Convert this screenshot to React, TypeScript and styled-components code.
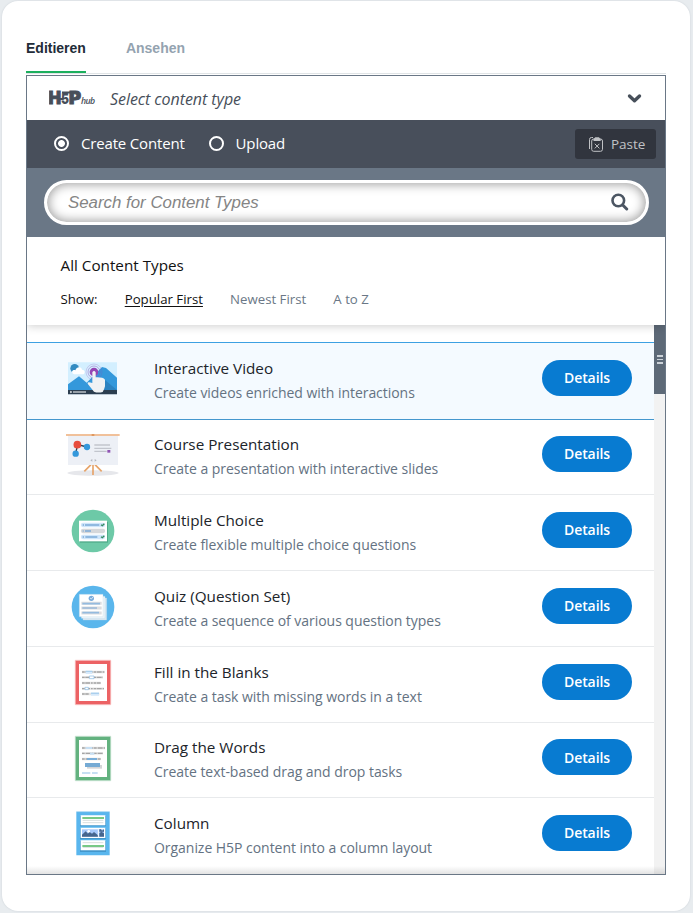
import React from "react";
import styled, { createGlobalStyle } from "styled-components";

const GlobalStyle = createGlobalStyle`
  * { box-sizing: border-box; }
  body { margin: 0; background: #e8ecef; font-family: "Open Sans", "Noto Sans", sans-serif; }
  button { font: inherit; border: 0; padding: 0; background: none; cursor: pointer; }
`;

const Page = styled.div`
  height: 913px;
  padding: 1px 3px 2px 2px;
`;

const Card = styled.main`
  height: 910px;
  padding: 0 24px;
  background: #fff;
  border-radius: 16px;
  box-shadow: 0 0 2px rgba(70, 90, 110, 0.18);
`;

const Tabs = styled.nav`
  display: flex;
  gap: 40px;
  width: 640px;
  height: 73px;
  padding-top: 32px;
  border-bottom: 1px solid #e0e4e6;
`;

const Tab = styled.button<{ $active?: boolean }>`
  height: 40px;
  padding-bottom: 9px;
  font: bold 14px "Liberation Sans", Arial, sans-serif;
  letter-spacing: 0;
  color: ${(p) => (p.$active ? "#222c38" : "#94a3b0")};
  border-bottom: 2px solid ${(p) => (p.$active ? "#1caf5d" : "transparent")};
`;

const Hub = styled.section`
  width: 640px;
  height: 800px;
  margin-top: 1px;
  border: 1px solid #6a7786;
  overflow: hidden;
`;

const HubHeader = styled.header`
  display: flex;
  align-items: center;
  height: 44px;
  padding: 0 23px 0 22px;
  color: #474f5a;
`;

const HubTitle = styled.span`
  flex: 1;
  margin-left: 13px;
  padding-top: 1px;
  font-size: 16px;
  font-style: italic;
  letter-spacing: -0.05px;
`;

const ModeBar = styled.div`
  display: flex;
  align-items: center;
  height: 48px;
  padding: 0 9px 0 27px;
  background: #484f5b;
  color: #fff;
`;

const Mode = styled.label`
  display: flex;
  align-items: center;
  gap: 12px;
  margin-right: 24px;
  padding-bottom: 2px;
  font-size: 15px;
  letter-spacing: -0.17px;
`;

const Radio = styled.span<{ $on?: boolean }>`
  width: 15px;
  height: 15px;
  border: 2px solid #fff;
  border-radius: 50%;
  background: ${(p) => (p.$on ? "radial-gradient(circle, #fff 0 3px, transparent 3.8px)" : "none")};
`;

const Paste = styled.button`
  display: flex;
  align-items: center;
  gap: 7px;
  width: 81px;
  height: 30px;
  margin-left: auto;
  padding-left: 13px;
  border-radius: 3px;
  background: #31353e;
  color: #c0c2c5;
  font-size: 13.5px;
`;

const SearchBar = styled.div`
  height: 69px;
  padding: 12px 16px 12px 17px;
  background: #6a7786;
`;

const SearchField = styled.div`
  display: flex;
  align-items: center;
  justify-content: space-between;
  height: 45px;
  padding: 0 17px 1px 21px;
  border: 3px solid #fff;
  border-radius: 23px;
  background: #fff;
  box-shadow: inset 0 0 11px 1px rgba(0, 0, 0, 0.4);
`;

const Placeholder = styled.span`
  padding-top: 2px;
  font: italic 16.85px "Liberation Sans", Arial, sans-serif;
  color: #858585;
`;

const Filters = styled.div`
  position: relative;
  z-index: 1;
  height: 88px;
  padding: 17px 33.5px 0;
  box-shadow: 0 1px 9px rgba(0, 0, 0, 0.2);
  clip-path: inset(0 0 -14px 0);
  background: #fff;
`;

const FilterTitle = styled.h2`
  margin: 0;
  font-size: 15.25px;
  line-height: 22px;
  font-weight: 400;
  color: #111;
`;

const SortRow = styled.div`
  display: flex;
  gap: 27.2px;
  margin-top: 13px;
  font-size: 13.23px;
  line-height: 20px;
`;

const SortItem = styled.span<{ $kind?: "label" | "active" }>`
  color: ${(p) => (p.$kind ? "#111" : "#6a7786")};
  text-decoration: ${(p) => (p.$kind === "active" ? "underline" : "none")};
  text-underline-offset: 2px;
`;

const ListArea = styled.div`
  position: relative;
  display: flex;
  height: 549px;
  &::after {
    content: "";
    position: absolute;
    inset: auto 0 0;
    height: 8px;
    background: linear-gradient(rgba(0, 0, 0, 0), rgba(0, 0, 0, 0.11));
  }
`;

const List = styled.ul`
  flex: 1;
  margin: 0;
  padding: 17px 0 0;
  list-style: none;
`;

const Row = styled.li<{ $active?: boolean }>`
  display: flex;
  align-items: center;
  height: ${(p) => (p.$active ? "78px" : "75.88px")};
  margin-bottom: ${(p) => (p.$active ? "-1px" : "0")};
  padding: 0 22px ${(p) => (p.$active ? "2px" : "0")} 29px;
  position: relative;
  background: ${(p) => (p.$active ? "#f4faff" : "transparent")};
  border-top: ${(p) => (p.$active ? "1px solid #3ca0e2" : "0")};
  border-bottom: 1px solid ${(p) => (p.$active ? "#4497ce" : "#e8eaec")};
  &:last-child {
    border-bottom-color: transparent;
    padding-bottom: 1px;
  }
`;

const RowText = styled.div`
  flex: 1;
  margin-left: 18px;
`;

const RowTitle = styled.h3`
  margin: 0;
  font-size: 15.25px;
  line-height: 24px;
  font-weight: 400;
  color: #20242a;
`;

const RowDescription = styled.p`
  margin: 0;
  font-size: 14px;
  line-height: 25px;
  letter-spacing: -0.04px;
  color: #647282;
`;

const Details = styled.button`
  width: 90px;
  height: 36px;
  margin-top: -5px;
  border-radius: 18px;
  background: #087bd1;
  color: #fff;
  font-size: 14px;
  font-weight: 550;
  letter-spacing: -0.08px;
`;

const ScrollTrack = styled.div`
  width: 11px;
  background: #f2f2f2;
`;

const ScrollThumb = styled.div`
  display: flex;
  flex-direction: column;
  align-items: center;
  justify-content: center;
  gap: 2px;
  height: 69px;
  background: #5d6977;
`;

const Grip = styled.i`
  width: 6px;
  height: 1.5px;
  background: #ccd2d8;
`;

const IconSvg = styled.svg`
  display: block;
  flex: none;
`;

const Logo = () => (
  <svg width="48" height="22" viewBox="0 0 48 22" fill="#474f5a">
    <g fontFamily="Inter, sans-serif" fontWeight="900" stroke="#474f5a" strokeWidth="0.9">
      <text x="-0.5" y="16.5" fontSize="17" textLength="12.5" lengthAdjust="spacingAndGlyphs">H</text>
      <text x="12" y="16.7" fontSize="15" textLength="8" lengthAdjust="spacingAndGlyphs" strokeWidth="0">5</text>
      <text x="20" y="16.5" fontSize="17" textLength="12" lengthAdjust="spacingAndGlyphs">P</text>
    </g>
    <path d="M10 12h4.500M13 5.500h9" stroke="#474f5a" strokeWidth="2" />
    <text x="32" y="17.3" fontFamily="Open Sans, sans-serif" fontSize="8.7" fontWeight="600" fontStyle="italic" textLength="14">hub</text>
  </svg>
);

const Chevron = () => (
  <svg width="15" height="11" viewBox="0 0 15 11" fill="none" stroke="#474f5a" strokeWidth="3.4" strokeLinecap="round" strokeLinejoin="round">
    <path d="M2.5 3 7.5 7.8 12.5 3" />
  </svg>
);

const Clipboard = () => (
  <svg width="16" height="18" viewBox="0 0 16 18" fill="none" stroke="#c0c2c5" strokeWidth="1">
    <path d="M5 2.5H3.5Q1.500 2.500 1.500 4.500V14" />
    <rect x="3.7" y="4" width="10.8" height="12.3" rx="2" />
    <path d="M5.500 4Q6.500 3.300 7.200 2.300H11Q11.500 3.300 12.700 4V6H5.500Z" fill="#c0c2c5" stroke="none" />
    <path d="m6.8 8.8 4.6 4.6m0-4.6-4.6 4.6" />
  </svg>
);

const SearchIcon = () => (
  <svg width="18" height="18" viewBox="0 0 18 18" fill="none" stroke="#4c5663">
    <circle cx="7.3" cy="7.5" r="5.8" strokeWidth="2.6" />
    <path d="m11.700 12 4 4" strokeWidth="3" strokeLinecap="round" />
  </svg>
);

const VideoArt = () => (
  <g transform="translate(0 22)">
    <path fill="#d3efff" d="M36 39h147v96H36z" />
    <circle cx="56" cy="57" r="13" fill="#338bc1" />
    <path fill="#fff" d="M51 73c-7-7 1-13 7-10 4-12 18-11 20-2 11 0 10 14 2 14H55z" />
    <path fill="#3498db" d="m36 105 33-24 23 19 46-47 12 3 33 29v37H36z" />
    <path fill="#2c83c1" d="m144 90 39 32h-39z" />
    <path fill="#2c3e50" d="M36 122h147v13H36z" />
    <path stroke="#fff" strokeWidth="3" d="M51 128h39" />
    <path fill="#fff" d="m43 124 6 4-6 4z" />
    <g fill="none" stroke="#8e4bb4" strokeWidth="2">
      <circle cx="114" cy="68" r="24" opacity=".35" />
      <circle cx="114" cy="68" r="18" opacity=".65" />
    </g>
    <circle cx="114" cy="68" r="13" fill="#9545b4" />
    <path fill="#f0f2f4" d="M109 69q5-8 10 0v15q22-1 28 7v20q-2 9-7 17-14 4-26-1L95 103q-2-7 14-2z" />
  </g>
);

const PresentationArt = () => (
  <g transform="translate(0 18)">
    <ellipse cx="111" cy="147" rx="77" ry="8" fill="#e6e7eb" />
    <path stroke="#e6a46a" strokeWidth="5" d="m105 122-20 20m32-20 20 20M111 121v32" />
    <path fill="#edf0f6" d="M36 35h150v88H36z" />
    <path stroke="#edac78" strokeWidth="5" d="M30 33h161" />
    <path stroke="#db9156" strokeWidth="5" d="M107 33h8" />
    <path stroke="#2c3e50" strokeWidth="4" fill="none" d="m59 88 6-26 28 7" />
    <circle cx="64" cy="62" r="11.5" fill="#e74c3c" />
    <circle cx="93" cy="69" r="9.5" fill="#3498db" />
    <circle cx="59" cy="89" r="9.5" fill="#3498db" />
    <path stroke="#c2c5cd" strokeWidth="4" d="M115 63h47m-47 10h51m-51 9h37" />
    <path fill="#9055b4" d="M154 78h9v8h-9z" />
    <path fill="#b3b6bd" d="m103 109 6-4v8zm19 0-6-4v8z" />
  </g>
);

const ChoiceArt = () => (
  <g transform="translate(0 17)">
    <circle cx="111" cy="94" r="64" fill="#6dc9a7" />
    <path fill="#4fab8a" d="M72 67h84v62H72z" />
    <path fill="#fff" d="M69 63h84v62H69z" />
    <path stroke="#cfe5fa" strokeWidth="13" strokeLinecap="round" d="M81 76h60M81 112h60" />
    <path stroke="#d5d7da" strokeWidth="13" strokeLinecap="round" d="M81 94h60" />
    <path stroke="#7cabd8" strokeWidth="4" d="M80 76h4m3 0h43M80 94h3m4 0h18M80 112h4m4 0h36" />
    <path stroke="#368d61" strokeWidth="4" fill="none" d="m135 75 4 3 6-6m-10 39 4 3 6-6" />
  </g>
);

const QuizArt = () => (
  <g transform="translate(0 23)">
    <circle cx="111" cy="88" r="64" fill="#5ab6ec" />
    <path fill="#dce9f2" stroke="#b5d4e6" d="M81 61h71v66H81z" />
    <path fill="#eef5fa" stroke="#b5d4e6" d="M76 56h71v66H76z" />
    <path fill="#fff" stroke="#c0dceb" d="M70 50h71v67H70z" />
    <circle cx="106" cy="62" r="8" fill="#78abdb" />
    <path d="m102 61 4 3 5-6" fill="none" stroke="#fff" strokeWidth="2" />
    <path stroke="#dcdde0" strokeWidth="9" d="M76 77h61M76 91h61m-61 15h61" />
    <path stroke="#94bbdf" strokeWidth="5" d="M79 78h53m-53 27h50" />
    <path stroke="#78a6d4" strokeWidth="3" d="M79 91h44" />
  </g>
);

const BlanksArt = () => (
  <g transform="translate(0 18)">
    <path fill="#fff" stroke="#f6a4a4" strokeWidth="2" d="M58 25h106v133H58z" />
    <path fill="#fff" stroke="#ec6264" strokeWidth="10" d="M64 31h94v121H64z" />
    <path stroke="#e4e4e4" strokeWidth="7" d="M78 60h68M78 76h63M78 93h56m-56 17h66m-66 16h52" />
    <path stroke="#a5a5a5" strokeWidth="4" strokeDasharray="8 2 14 3 5 3" d="M78 60h68M78 76h63M78 93h56m-56 17h66m-66 16h20" />
    <path fill="#d6e9fa" d="M89 56h20v10H89zM105 121h24v10h-24z" />
    <path fill="#fff" stroke="#86b9e2" strokeWidth="2" d="M100 72h14v8h-14zM87 106h10v7H87z" />
    <path stroke="#86b9e2" strokeWidth="2" d="M89 58h20m-4 66h24" />
  </g>
);

const WordsArt = () => (
  <g transform="translate(0 24)">
    <path fill="#fff" stroke="#a9d3b9" strokeWidth="2" d="M58 19h106v133H58z" />
    <path fill="#fff" stroke="#63b27f" strokeWidth="10" d="M64 25h94v121H64z" />
    <path stroke="#e4e4e4" strokeWidth="7" d="M78 54h69M78 70h63M78 87h56" />
    <path stroke="#a5a5a5" strokeWidth="4" strokeDasharray="8 3 15 3 5 2" d="M78 54h69M78 70h63M78 87h56" />
    <path stroke="#c7dff3" strokeWidth="6" d="M89 54h20m-7 17h13M78 129h25m5 0h17" />
    <path stroke="#79aed9" strokeWidth="6" d="M93 87h30" />
    <path fill="#d4d5d7" d="M93 105h45v11H93z" />
    <path fill="#75aad4" d="M87 99h45v12H87z" />
  </g>
);

const ColumnArt = () => (
  <g transform="translate(0 19)">
    <path fill="#59b6ee" d="M61 25h100v131H61z" />
    <path stroke="#9ed2f1" strokeWidth="2" d="M61 25h100" />
    <path fill="#4397cc" d="M72 38h78v31H72zm0 37h78v33H72zm0 38h78v33H72z" />
    <path fill="#fff" d="M74 36h74v30H74zm0 37h74v31H74zm0 38h74v30H74z" />
    <path stroke="#d9dfdf" strokeWidth="3" d="M80 51h62m-62 7h62m-62 60h62m-62 14h62" />
    <path stroke="#4bb860" strokeWidth="4" d="M79 44h65m-65 84h65" />
    <path fill="#a5c7fa" d="M78 78h66v22H78z" />
    <path fill="#46658d" d="m78 94 11-10 7 7 4-6 8 6 6-5 12 10v4H78zm52-4 6-5 8 5v10h-14zm0-12h5l3 4 6-4v7h-14z" />
    <circle cx="98" cy="84" r="4" fill="#fff" />
    <path stroke="#fff" strokeWidth="3" d="M127 78v22" />
  </g>
);

const contentTypes = [
  { title: "Interactive Video", text: "Create videos enriched with interactions", Art: VideoArt },
  { title: "Course Presentation", text: "Create a presentation with interactive slides", Art: PresentationArt },
  { title: "Multiple Choice", text: "Create flexible multiple choice questions", Art: ChoiceArt },
  { title: "Quiz (Question Set)", text: "Create a sequence of various question types", Art: QuizArt },
  { title: "Fill in the Blanks", text: "Create a task with missing words in a text", Art: BlanksArt },
  { title: "Drag the Words", text: "Create text-based drag and drop tasks", Art: WordsArt },
  { title: "Column", text: "Organize H5P content into a column layout", Art: ColumnArt },
];

export default function App() {
  return (
    <>
      <GlobalStyle />
      <Page>
        <Card>
          <Tabs>
            <Tab $active>Editieren</Tab>
            <Tab>Ansehen</Tab>
          </Tabs>
          <Hub>
            <HubHeader>
              <Logo />
              <HubTitle>Select content type</HubTitle>
              <Chevron />
            </HubHeader>
            <ModeBar>
              <Mode><Radio $on />Create Content</Mode>
              <Mode><Radio />Upload</Mode>
              <Paste><Clipboard />Paste</Paste>
            </ModeBar>
            <SearchBar>
              <SearchField>
                <Placeholder>Search for Content Types</Placeholder>
                <SearchIcon />
              </SearchField>
            </SearchBar>
            <Filters>
              <FilterTitle>All Content Types</FilterTitle>
              <SortRow>
                <SortItem $kind="label">Show:</SortItem>
                <SortItem $kind="active">Popular First</SortItem>
                <SortItem>Newest First</SortItem>
                <SortItem>A to Z</SortItem>
              </SortRow>
            </Filters>
            <ListArea>
              <List>
                {contentTypes.map(({ title, text, Art }, i) => (
                  <Row key={title} $active={i === 0}>
                    <IconSvg width="80" height="76" viewBox="0 0 240 228"><Art /></IconSvg>
                    <RowText>
                      <RowTitle>{title}</RowTitle>
                      <RowDescription>{text}</RowDescription>
                    </RowText>
                    <Details>Details</Details>
                  </Row>
                ))}
              </List>
              <ScrollTrack>
                <ScrollThumb><Grip /><Grip /><Grip /></ScrollThumb>
              </ScrollTrack>
            </ListArea>
          </Hub>
        </Card>
      </Page>
    </>
  );
}
